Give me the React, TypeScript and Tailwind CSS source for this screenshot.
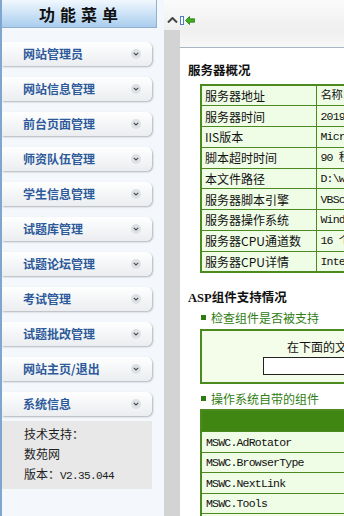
import React from 'react';

const menuItems = [
  '网站管理员',
  '网站信息管理',
  '前台页面管理',
  '师资队伍管理',
  '学生信息管理',
  '试题库管理',
  '试题论坛管理',
  '考试管理',
  '试题批改管理',
  '网站主页/退出',
  '系统信息',
];

const serverRows: [string, string][] = [
  ['服务器地址', '名称：WIN-SERVER'],
  ['服务器时间', '2019/10/22 10:21:33'],
  ['IIS版本', 'Microsoft-IIS/7.5'],
  ['脚本超时时间', '90 秒'],
  ['本文件路径', 'D:\\web\\admin\\main.asp'],
  ['服务器脚本引擎', 'VBScript/5.8.16384'],
  ['服务器操作系统', 'Windows_NT'],
  ['服务器CPU通道数', '16 个'],
  ['服务器CPU详情', 'Intel64 Family 6'],
];

const components = ['MSWC.AdRotator', 'MSWC.BrowserType', 'MSWC.NextLink', 'MSWC.Tools', 'MSWC.Status'];

const Chevron: React.FC = () => (
  <span className="flex h-[10px] w-[10px] items-center justify-center rounded-full bg-[#dde1e6]">
    <svg width="6" height="4" viewBox="0 0 6 4">
      <path d="M0.8 0.8 L3 3 L5.2 0.8" fill="none" stroke="#4a4a4a" strokeWidth="1.1" />
    </svg>
  </span>
);

const MenuItem: React.FC<{ label: string }> = ({ label }) => (
  <div className="flex h-[24px] w-[150px] items-center justify-between rounded-r-[6px] bg-gradient-to-b from-white to-[#ebedf0] pl-[21px] pr-[11px] shadow-[1px_1px_2px_rgba(0,0,0,0.28)]">
    <span className="text-[12px] font-bold text-[#2d5a9b]">{label}</span>
    <Chevron />
  </div>
);

export default function App() {
  return (
    <div className="flex h-[516px] w-[344px] overflow-hidden bg-white font-['Noto_Sans_CJK_SC',sans-serif]">
      {/* Sidebar */}
      <aside className="flex w-[164px] shrink-0 flex-col border-l-2 border-[#7fa6cf] bg-[#f4f8fd]">
        <div className="flex h-[28px] w-[155px] items-center justify-center border-b border-r border-[#8fb0d0] bg-gradient-to-b from-[#f1f8fe] to-[#a9cdee]">
          <span className="pl-[4px] text-[16px] font-bold tracking-[5px] text-[#111]">功能菜单</span>
        </div>
        <div className="mt-[14px] flex flex-col gap-[11px]">
          {menuItems.map((m) => (
            <MenuItem key={m} label={m} />
          ))}
        </div>
        <div className="mt-[5px] flex w-[150px] flex-col bg-[#e8e8e8] py-[3px] pl-[22px] text-[12px] leading-[20px] text-[#222]">
          <span>技术支持：</span>
          <span>数苑网</span>
          <span>
            版本：<span className="font-['Liberation_Mono',monospace] text-[11px] tracking-[-0.6px]">V2.35.044</span>
          </span>
        </div>
      </aside>

      {/* Right side */}
      <div className="flex min-w-0 flex-1 flex-col">
        <div className="flex h-[30px] shrink-0 items-end bg-gradient-to-b from-[#fbfbfb] to-[#efefef] pb-[5px]">
          <div className="flex w-[16px] justify-center pb-[2px]">
            <svg width="11" height="6" viewBox="0 0 11 6">
              <path d="M1 5.5 L5.5 1 L10 5.5" fill="none" stroke="#444" strokeWidth="2" />
            </svg>
          </div>
          <svg width="4" height="9" viewBox="0 0 4 9">
            <rect x="0.5" y="0.5" width="3" height="8" fill="#fff" stroke="#4a7fc6" />
          </svg>
          <svg width="10" height="9" viewBox="0 0 10 9" className="ml-[1px]">
            <polygon points="0.5,4.5 4.5,0.5 4.5,2.8 9.5,2.8 9.5,6.2 4.5,6.2 4.5,8.5" fill="#3fae22" stroke="#2a7a14" strokeWidth="0.8" />
          </svg>
        </div>
        <div className="flex min-h-0 flex-1">
          <div className="w-[16px] shrink-0 bg-[#d3d3d3]" />
          <div className="min-w-0 flex-1 overflow-hidden">
            <div className="h-[18px] border-b border-[#a8b6c4] bg-gradient-to-b from-[#efefef] to-[#f8f8f8]" />
            <div className="w-[600px] pl-[8px] pt-[14px]">
              <h2 className="text-[12.5px] font-bold leading-[16px] text-[#111]">服务器概况</h2>
              <table className="ml-[12px] mt-[6px] border-collapse border-2 border-[#4b8a1f] text-[12px] text-[#111]">
                <tbody>
                  {serverRows.map(([k, v]) => (
                    <tr key={k} className="h-[20.75px] bg-[#effce6]">
                      <td className="w-[115px] border border-[#4b8a1f] pl-[3px] leading-[19px]">{k}</td>
                      <td className="w-[300px] border border-[#4b8a1f] pl-[4px] font-['Liberation_Mono','Noto_Sans_CJK_SC',monospace] text-[11.5px] leading-[19px] tracking-[-0.8px]">
                        {v}
                      </td>
                    </tr>
                  ))}
                </tbody>
              </table>

              <h2 className="mt-[16px] text-[12.5px] font-bold leading-[16px] text-[#111]">
                <span className="font-['Liberation_Serif',serif]">ASP</span>组件支持情况
              </h2>
              <div className="ml-[13px] mt-[4px] flex items-center text-[12px] leading-[16px] text-[#2f7d12]">
                <span className="mr-[5px] h-[5px] w-[5px] bg-[#2f7d12]" />
                检查组件是否被支持
              </div>
              <div className="ml-[12px] mt-[3px] h-[55px] w-[420px] border-2 border-[#4b8a1f] bg-[#f3fdea] pt-[8px]">
                <div className="pl-[85px] text-[12px] leading-[16px] text-[#111]">在下面的文本框中输入你要检测的组件的ProgId或ClassId</div>
                <div className="ml-[61px] mt-[2px] h-[18px] w-[200px] border border-[#222] bg-white" />
              </div>
              <div className="ml-[13px] mt-[7px] flex items-center text-[12px] leading-[16px] text-[#2f7d12]">
                <span className="mr-[5px] h-[5px] w-[5px] bg-[#2f7d12]" />
                操作系统自带的组件
              </div>
              <table className="ml-[12px] mt-[2px] w-[420px] border-collapse border-2 border-[#4b8a1f] text-[12px] text-[#111]">
                <tbody>
                  <tr className="h-[22px] bg-[#3f8612]">
                    <td className="border border-[#4b8a1f]" />
                    <td className="border border-[#4b8a1f]" />
                  </tr>
                  {components.map((c) => (
                    <tr key={c} className="h-[20.5px] bg-[#effce6]">
                      <td className="w-[250px] border border-[#4b8a1f] pl-[4px] font-['Liberation_Mono',monospace] text-[11.5px] leading-[19px] tracking-[-0.8px]">
                        {c}
                      </td>
                      <td className="border border-[#4b8a1f]" />
                    </tr>
                  ))}
                </tbody>
              </table>
            </div>
          </div>
        </div>
      </div>
    </div>
  );
}
